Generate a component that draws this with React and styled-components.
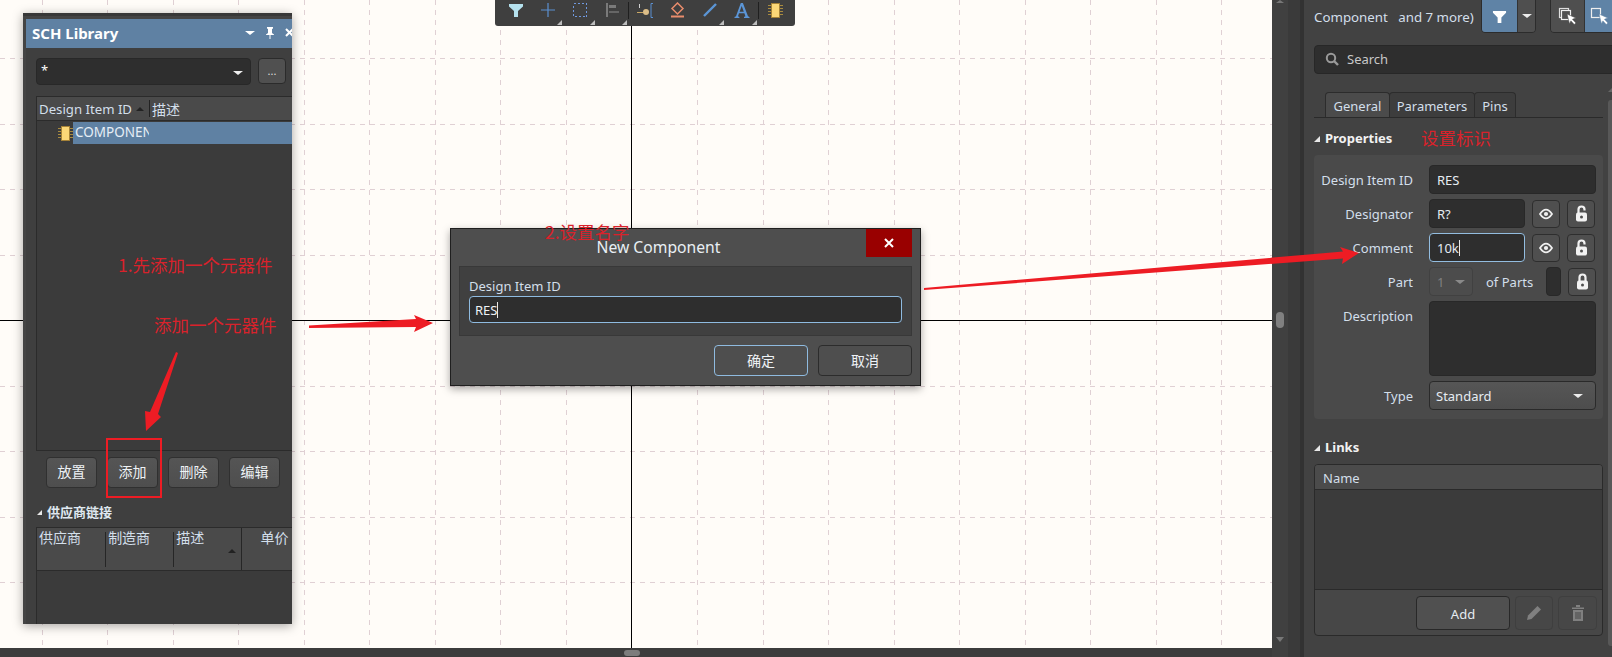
import React from "react";
import styled, { createGlobalStyle } from "styled-components";

const UI = '"Noto Sans","Noto Sans CJK SC",sans-serif';
const CJK = '"Noto Sans CJK SC","Noto Sans",sans-serif';

const Global = createGlobalStyle`
  html, body { margin: 0; padding: 0; background: #fffcf8; overflow: hidden; }
  * { box-sizing: border-box; }
`;

const Page = styled.div`
  position: relative; width: 1612px; height: 657px; display: flex; overflow: hidden;
  font: 13px/18px ${UI}; color: #d3dfea;
`;
const CanvasColumn = styled.div`display: flex; flex-direction: column; width: 1272px;`;
const Canvas = styled.div`position: relative; flex: 1; background: #fffcf8; overflow: hidden;`;
const GridSvg = styled.svg`display: block;`;
const BottomBar = styled.div`
  position: relative; height: 9px; background: #3c3c3c; display: flex; justify-content: center;
`;
const BottomThumb = styled.div`width: 16px; height: 6px; margin: 2px 0 0 -8px; border-radius: 3px; background: #7c7c7c;`;

const Rail = styled.div`position: relative; width: 16px; background: #404040;`;
const RailThumb = styled.div`position: absolute; left: 4px; top: 312px; width: 8px; height: 16px; border-radius: 4px; background: #808080;`;
const RailArrow = styled.div`
  position: absolute; left: 4px; width: 0; height: 0; border-left: 4px solid transparent; border-right: 4px solid transparent;
  ${p => p.$up ? "top: 0; border-bottom: 3px solid #777;" : "top: 637px; border-top: 5px solid #777;"}
`;
const Gutter = styled.div`width: 12px; background: #3a3a3a;`;
const Divider = styled.div`width: 4px; background: #323232;`;

/* Properties */
const Props = styled.div`position: relative; width: 308px; background: #424242; padding-left: 10px; overflow: hidden;`;
const PropHead = styled.div`display: flex; align-items: center; height: 33px; white-space: pre; width: 310px;`;
const HeadText = styled.span`width: 167px; font-size: 13.3px;`;
const HeadGroup = styled.div`
  display: flex; height: 34px; margin-top: -1px; border: 1px solid #2c2c2c; border-radius: 0 0 4px 4px; overflow: hidden;
  margin-right: ${p => p.$mr || 0}px;
`;
const HeadBtn = styled.div`
  width: ${p => p.$w}px; display: flex; align-items: center; justify-content: center;
  background: ${p => p.$active ? "#5f83a6" : "#4f4f4f"};
  & + & { border-left: 1px solid #333; }
`;
const SearchBox = styled.div`
  display: flex; align-items: center; height: 29px; width: 310px; margin-top: 12px; padding: 0 0 2px 10px; gap: 8px;
  background: #2e2e2e; border: 1px solid #272727; border-radius: 4px; color: #c8c8c8;
`;
const Tabs = styled.div`
  display: flex; margin-top: 18px; height: 26px; width: 289px; padding-left: 11px; border-bottom: 1px solid #2a2a2a;
`;
const Tab = styled.div`
  width: ${p => p.$w}px; height: 25px; display: flex; align-items: center; justify-content: center; padding-top: 2px;
  background: ${p => p.$active ? "#4b4b4b" : "#3d3d3d"}; border: 1px solid #2c2c2c; border-bottom: 0; border-radius: 4px 4px 0 0;
  margin-right: -1px;
`;
const Section = styled.div`
  display: flex; align-items: center; gap: 5px; height: 20px; margin-top: ${p => p.$mt}px; padding-bottom: 2px; font-weight: 700; color: #f2f2f2;
`;
const Caret = styled.span`
  width: 0; height: 0; border-bottom: 6px solid #e8e8e8; border-left: 6px solid transparent; margin-top: 2px;
`;
const PropBlock = styled.div`
  width: 289px; margin-top: 6px; padding: 10px 7px 9px 0; background: #4a4a4a; border-radius: 4px;
  display: flex; flex-direction: column; gap: 5px;
`;
const PropRow = styled.div`
  display: grid; grid-template-columns: 99px 1fr; column-gap: 16px; min-height: ${p => p.$h || 29}px;
  align-items: ${p => p.$top ? "start" : "center"};
`;
const PropLabel = styled.div`text-align: right; padding-top: ${p => p.$pt || 0}px;`;
const Controls = styled.div`display: flex; align-items: center; gap: 7px;`;
const Field = styled.div`
  flex: ${p => p.$w ? `0 0 ${p.$w}px` : 1}; height: ${p => p.$h || 29}px; display: flex; align-items: center; padding-left: 7px;
  background: #2e2e2e; border: 1px solid ${p => p.$focus ? "#93bde0" : "#282828"}; border-radius: 4px; color: #e6ecf2;
`;
const Caretline = styled.span`display: inline-block; width: 1px; height: 16px; background: #e8e8e8; margin-left: 0;`;
const IconBtn = styled.div`
  flex: 0 0 ${p => p.$w || 28}px; height: ${p => p.$h || 28}px; display: flex; align-items: center; justify-content: center;
  background: #4f4f4f; border: 1px solid #2e2e2e; border-radius: 4px;
  ${p => p.$off && "background: #474747; border-color: #3f3f3f;"}
`;
const PartSelect = styled.div`
  flex: 0 0 44px; height: 29px; display: flex; align-items: center; justify-content: space-between; padding: 0 7px 0 7px;
  background: #4c4c4c; border: 1px solid #414141; border-radius: 4px; color: #808080;
`;
const OfParts = styled.span`flex: 0 0 60px; margin-left: 6px; white-space: nowrap;`;
const TinyField = styled.div`flex: 0 0 15px; height: 29px; background: #2e2e2e; border: 1px solid #282828; border-radius: 4px; margin-left: -7px;`;
const SelectBox = styled.div`
  flex: 1; height: 29px; display: flex; align-items: center; justify-content: space-between; padding: 0 12px 0 6px;
  background: linear-gradient(#565656, #4d4d4d); border: 1px solid #2a2a2a; border-radius: 4px; color: #e6ecf2;
`;
const DownTri = styled.span`
  width: 0; height: 0; border-left: ${p => p.$s || 5}px solid transparent; border-right: ${p => p.$s || 5}px solid transparent;
  border-top: ${p => (p.$s || 5) - 1}px solid ${p => p.$c || "#ececec"};
`;
const LinksTable = styled.div`
  width: 289px; margin-top: 6px; height: 172px; display: flex; flex-direction: column;
  background: #474747; border: 1px solid #2a2a2a; border-radius: 4px; overflow: hidden;
`;
const LinksHead = styled.div`height: 25px; display: flex; align-items: center; padding: 2px 0 0 8px; background: #4b4b4b; border-bottom: 1px solid #2a2a2a;`;
const LinksBody = styled.div`height: 100px; background: #3b3b3b; border-bottom: 1px solid #2a2a2a;`;
const LinksFoot = styled.div`flex: 1; display: flex; align-items: center; justify-content: flex-end; gap: 5px; padding-right: 5px;`;
const AddBtn = styled.div`
  width: 94px; height: 34px; display: flex; align-items: center; justify-content: center; padding-top: 2px;
  background: #505050; border: 1px solid #282828; border-radius: 4px; color: #e6ecf2;
`;
const PanelScroll = styled.div`position: absolute; right: 0; top: 100px; width: 4px; height: 546px; background: #585858; border-radius: 3px 0 0 3px;`;
const PanelScrollUp = styled.div`
  position: absolute; right: 0; top: 88px; width: 0; height: 0; border-left: 4px solid transparent; border-bottom: 4px solid #666;
`;

/* Library panel */
const LibPanel = styled.div`
  position: absolute; left: 23px; top: 13px; width: 269px; height: 611px; padding-left: 3px; display: flex; flex-direction: column;
  background: #444; border-top: 3px solid #383838; box-shadow: 0 2px 10px rgba(0,0,0,.35); overflow: hidden;
`;
const LibBody = styled.div`flex: 1; display: flex; flex-direction: column; margin-top: 3px; background: #3f3f3f; min-height: 0;`;
const LibTitle = styled.div`
  height: 29px; flex: none; display: flex; align-items: center; padding: 0 0 2px 6px; background: #5f81a3;
  color: #fff; font-size: 15px; font-weight: 700;
`;
const LibTitleText = styled.span`flex: 1;`;
const TitleTools = styled.div`display: flex; align-items: center; gap: 10px; margin-right: -2px;`;
const FilterRow = styled.div`display: flex; gap: 7px; margin: 10px 0 0 10px;`;
const FilterInput = styled.div`
  width: 215px; height: 27px; display: flex; justify-content: space-between; align-items: flex-start; padding: 2px 7px 0 4px;
  background: #2e2e2e; border: 1px solid #282828; border-radius: 4px; color: #fff;
`;
const FilterTri = styled(DownTri)`margin-top: 10px;`;
const MoreBtn = styled.div`
  width: 28px; height: 26px; display: flex; align-items: center; justify-content: center;
  background: #505050; border: 1px solid #2b2b2b; border-radius: 4px; color: #ddd; font-size: 11px;
`;
const ListTable = styled.div`
  margin: 11px 0 0 10px; height: 355px; flex: none; background: #3b3b3b; border: 1px solid #2b2b2b; border-right: 0;
`;
const ListHead = styled.div`
  height: 24px; display: flex; align-items: center; background: #4a4a4a; border-bottom: 1px solid #2b2b2b; padding-left: 2px; font-size: 13.2px;
`;
const ListCol = styled.div`
  width: ${p => p.$w}px; height: 100%; display: flex; align-items: center; justify-content: space-between; padding-right: 5px; white-space: nowrap; font-family: ${p => p.$cjk ? CJK : UI};
  ${p => p.$cjk && "font-size: 14px; padding-left: 2px; border-left: 1px solid #222; height: 17px;"}
`;
const UpTri = styled.span`
  width: 0; height: 0; border-left: 4px solid transparent; border-right: 4px solid transparent; border-bottom: 4px solid #222;
`;
const ListRow = styled.div`height: 22px; margin-top: 1px; display: flex; align-items: center; padding-left: 20px;`;
const ChipCell = styled.div`width: 16px; display: flex; justify-content: center;`;
const RowName = styled.div`
  flex: 1; height: 22px; background: #5f81a3; padding-left: 2px; color: #e6eef6; line-height: 20px; font-size: 13.5px;
`;
const RowClip = styled.div`width: 74px; overflow: hidden; white-space: nowrap;`;
const ActionRow = styled.div`display: flex; gap: 10px; margin: 6px 0 0 20px;`;
const ActionBtn = styled.div`
  width: 51px; height: 31px; display: flex; align-items: center; justify-content: center; padding-bottom: 3px;
  background: linear-gradient(#555, #4e4e4e); border: 1px solid #303030; border-radius: 4px; color: #eef2f6; font: 14px/18px ${CJK};
`;
const SupplierTitle = styled.div`
  display: flex; align-items: center; gap: 5px; height: 20px; margin: 15px 0 0 11px; padding-bottom: 2px; font: 700 13px/18px ${CJK}; color: #dfe8f0;
`;
const SmallCaret = styled.span`
  width: 0; height: 0; border-bottom: 5px solid #e8e8e8; border-left: 5px solid transparent;
`;
const SupplierTable = styled.div`
  flex: 1; margin: 4px 0 0 10px; background: #3b3b3b; border: 1px solid #2b2b2b; border-right: 0; border-bottom: 0;
`;
const SupplierHead = styled.div`
  height: 43px; display: flex; background: #4a4a4a; border-bottom: 1px solid #2b2b2b; font: 14px/18px ${CJK};
`;
const SupplierCol = styled.div`
  position: relative; width: ${p => p.$w}px; padding: 0 0 0 ${p => p.$pl || 2}px; white-space: nowrap;
  &::after { content: ""; display: ${p => p.$last ? "none" : "block"}; position: absolute; right: 0; top: ${p => p.$tall ? 0 : 4}px; bottom: ${p => p.$tall ? 0 : 3}px; width: 1px; background: #262626; }
`;
const SortMark = styled.span`position: absolute; right: 6px; top: 21px; border-left: 4px solid transparent; border-right: 4px solid transparent; border-bottom: 4px solid #222;`;

/* Toolbar */
const Toolbar = styled.div`
  position: absolute; left: 495px; top: 0; width: 300px; height: 26px; display: flex; padding: 0 0 0 4px;
  background: #3f3f3f; border-radius: 0 0 3px 3px;
`;
const ToolCell = styled.div`
  position: relative; width: 32.2px; height: 26px; padding: 0 0 6px 1px; display: flex; align-items: center; justify-content: center;
  ${p => p.$more && `&::after { content: ""; position: absolute; right: 1px; bottom: 1px; border-bottom: 5px solid #bdbdbd; border-left: 5px solid transparent; }`}
`;
const ToolSep = styled.div`width: 1px; height: 17px; margin-top: 2px; background: #1f1f1f;`;

/* Dialog */
const Dialog = styled.div`
  position: absolute; left: 450px; top: 228px; width: 471px; height: 158px; display: flex; flex-direction: column;
  background: #4e4e4e; border: 1px solid #1f1f1f; box-shadow: 0 3px 8px rgba(0,0,0,.35);
`;
const DialogHead = styled.div`display: flex; height: 37px; padding-right: 8px; flex: none;`;
const DialogTitle = styled.div`flex: 1; text-align: center; font-size: 15.7px; line-height: 36px; color: #e8eef4;`;
const CloseBtn = styled.div`width: 46px; height: 28px; display: flex; align-items: center; justify-content: center; background: #990000;`;
const DialogBox = styled.div`
  height: 70px; margin: 0 8px; padding: 10px 9px; background: #404040; border: 1px solid #383838;
`;
const DialogLabel = styled.div`height: 19px; line-height: 18px;`;
const DialogInput = styled.div`
  height: 27px; display: flex; align-items: center; padding-left: 5px;
  background: #2e2e2e; border: 1px solid #8fbbe0; border-radius: 4px; color: #eef2f6;
`;
const DialogFoot = styled.div`display: flex; justify-content: flex-end; gap: 10px; margin-top: 9px; padding-right: 8px;`;
const DialogBtn = styled.div`
  width: 94px; height: 31px; display: flex; align-items: center; justify-content: center; padding-bottom: 1px;
  background: #4e4e4e; border: 1px solid ${p => p.$primary ? "#8fbbe0" : "#2c2c2c"}; border-radius: 4px; color: #eef2f6; font: 14px/18px ${CJK};
`;

/* Annotations over the screenshot */
const Note = styled.div`
  position: absolute; left: ${p => p.$x}px; top: ${p => p.$y}px; font: 17.5px/22px ${CJK}; color: #d9222b; white-space: nowrap;
`;
const RedBox = styled.div`position: absolute; left: 106px; top: 438px; width: 56px; height: 60px; border: 2px solid #ed1c24;`;
const ArrowLayer = styled.svg`position: absolute; left: 0; top: 0; pointer-events: none;`;

const GXS = Array.from({ length: 19 }, (_, i) => 41.5 + i * 65.55);
const GYS = Array.from({ length: 9 }, (_, i) => 58 + i * 65.55);

const Funnel = ({ c = "#fff", s = 16 }) => (
  <svg width={s} height={s} viewBox="0 0 16 16"><path d="M1 2h14v2l-5 5v6H6V9L1 4z" fill={c} /></svg>
);
const Chip = () => (
  <svg width="15" height="15" viewBox="0 0 15 15">
    <path d="M0 2.500h15M0 5.500h15M0 8.500h15M0 11.500h15" stroke="#a98b3f" strokeWidth="1" />
    <rect x="3.500" y=".5" width="8" height="14" fill="#fbd777" stroke="#a58238" />
  </svg>
);
const Eye = () => (
  <svg width="14" height="12" viewBox="0 0 14 12">
    <path d="M1 6c2-3 4-4.300 6-4.300S11 3 13 6c-2 3-4 4.300-6 4.300S3 9 1 6z" fill="none" stroke="#f0f0f0" strokeWidth="1.800" />
    <circle cx="7" cy="6" r="2.100" fill="#f0f0f0" />
  </svg>
);
const Lock = ({ open }) => (
  <svg width="13" height="17" viewBox="0 0 13 17">
    <path d={open ? "M3.500 8V4.500a3 3 0 0 1 6 0v1" : "M3.500 8V4.500a3 3 0 0 1 6 0V8"} fill="none" stroke="#f2f2f2" strokeWidth="2.200" />
    <rect x="1" y="7.500" width="11" height="9" rx="2" fill="#f2f2f2" />
    <circle cx="6.500" cy="12" r="1.500" fill="#4f4f4f" />
  </svg>
);
const SelectCursors = ({ single }) => (
  <svg width="20" height="18" viewBox="0 0 20 18">
    {!single && <rect x="1.500" y="1.500" width="9" height="9" fill="none" stroke="#ddd" strokeWidth="1.200" />}
    <rect x={single ? 1.5 : 3.5} y={single ? 1.5 : 3.5} width="9" height="9" fill={single ? "none" : "#4f4f4f"} stroke="#eee" strokeWidth="1.200" />
    <path d="M9 7l9 4-3.500 1.300L18 16l-1.800 1.500-3.300-3.600L11.500 17z" fill="#fff" stroke={single ? "#5f83a6" : "#4f4f4f"} strokeWidth=".6" />
  </svg>
);

const gridLines = (
  <GridSvg width="1272" height="648">
    <g stroke="#e0d0d4" strokeWidth="1" strokeDasharray="5 5" shapeRendering="crispEdges">
      {GXS.map(x => <line key={x} x1={Math.round(x) + .5} x2={Math.round(x) + .5} y1="0" y2="648" />)}
      {GYS.map(y => <line key={y} y1={Math.round(y) + .5} y2={Math.round(y) + .5} x1="0" x2="1272" />)}
    </g>
    <g stroke="#000" strokeWidth="1" shapeRendering="crispEdges">
      <line x1="631.5" x2="631.5" y1="0" y2="648" />
      <line x1="0" x2="1272" y1="320.5" y2="320.5" />
    </g>
  </GridSvg>
);

const tools = [
  { el: <svg width="14" height="13" viewBox="0 0 14 13"><path d="M0 0h14v2.500L9 7v6H5V7L0 2.500z" fill="#b5e1ee" /></svg> },
  { more: 1, el: <svg width="14" height="14" viewBox="0 0 14 14"><path d="M7 0v14M0 7h14" stroke="#5b8fd0" strokeWidth="1.200" /></svg> },
  { more: 1, el: <svg width="14" height="14" viewBox="0 0 14 14"><rect x=".5" y=".5" width="13" height="13" fill="none" stroke="#6f97dc" strokeWidth="1" strokeDasharray="2 2" shapeRendering="crispEdges" /></svg> },
  { more: 1, el: <svg width="13" height="14" viewBox="0 0 13 14"><path d="M1 0v14" stroke="#7a7a7a" strokeWidth="2" /><path d="M3 2h7v3H3z" fill="#7a7a7a" /><path d="M3 8h10v2H3z" fill="#666" /></svg> },
  { sep: 1 },
  { el: <svg width="16" height="15" viewBox="0 0 16 15"><path d="M0 9.500h6" stroke="#c9a765" strokeWidth="1" /><circle cx="9" cy="9" r="3" fill="#dcbd87" /><path d="M16 .5h-2v14h2" fill="none" stroke="#5b8fd0" strokeWidth="1" /><path d="M2.500 1v4" stroke="#cfcfcf" strokeWidth="1" /></svg> },
  { el: <svg width="15" height="16" viewBox="0 0 15 16"><path d="M7.500 1L13 6.500 7.500 12 2 6.500z" fill="none" stroke="#e88c6c" strokeWidth="1.500" /><path d="M1 14.500h13" stroke="#e88c6c" strokeWidth="2" /></svg> },
  { more: 1, el: <svg width="14" height="14" viewBox="0 0 14 14"><path d="M1 13L13 1" stroke="#5b95d6" strokeWidth="2.400" /></svg> },
  { more: 1, el: <svg width="16" height="15" viewBox="0 0 16 15"><path d="M6.800 0h2.100L14 13.200l1.500.8v1h-5.500v-1l1.400-.7-1-3H5l-1 3 1.400.7v1H.5v-1l1.500-.8zM7.700 3L5.600 8.800h4.200z" fill="#5b95d6" /></svg> },
  { sep: 1 },
  { el: <Chip /> },
];

export default function App() {
  return (
    <Page>
      <Global />
      <CanvasColumn>
        <Canvas>{gridLines}</Canvas>
        <BottomBar><BottomThumb /></BottomBar>
      </CanvasColumn>
      <Rail>
        <RailArrow $up />
        <RailThumb />
        <RailArrow />
      </Rail>
      <Gutter />
      <Divider />
      <Props>
        <PropHead>
          <HeadText>Component   and 7 more)</HeadText>
          <HeadGroup $mr={14}>
            <HeadBtn $w={35} $active><Funnel s={15} /></HeadBtn>
            <HeadBtn $w={18}><DownTri $s={5} /></HeadBtn>
          </HeadGroup>
          <HeadGroup>
            <HeadBtn $w={33}><SelectCursors /></HeadBtn>
            <HeadBtn $w={30} $active><SelectCursors single /></HeadBtn>
          </HeadGroup>
        </PropHead>
        <SearchBox>
          <svg width="14" height="14" viewBox="0 0 14 14"><circle cx="6" cy="6" r="4.200" fill="none" stroke="#9a9a9a" strokeWidth="2" /><path d="M9 9l4 4" stroke="#9a9a9a" strokeWidth="2.400" /></svg>
          Search
        </SearchBox>
        <Tabs>
          <Tab $w={65} $active>General</Tab>
          <Tab $w={86}>Parameters</Tab>
          <Tab $w={42}>Pins</Tab>
        </Tabs>
        <Section $mt={11}><Caret />Properties</Section>
        <PropBlock>
          <PropRow>
            <PropLabel>Design Item ID</PropLabel>
            <Controls><Field>RES</Field></Controls>
          </PropRow>
          <PropRow>
            <PropLabel>Designator</PropLabel>
            <Controls><Field $w={96}>R?</Field><IconBtn><Eye /></IconBtn><IconBtn><Lock open /></IconBtn></Controls>
          </PropRow>
          <PropRow>
            <PropLabel>Comment</PropLabel>
            <Controls><Field $w={96} $focus>10k<Caretline /></Field><IconBtn><Eye /></IconBtn><IconBtn><Lock open /></IconBtn></Controls>
          </PropRow>
          <PropRow>
            <PropLabel>Part</PropLabel>
            <Controls>
              <PartSelect>1<DownTri $c="#8a8a8a" /></PartSelect>
              <OfParts>of Parts</OfParts>
              <TinyField />
              <IconBtn><Lock /></IconBtn>
            </Controls>
          </PropRow>
          <PropRow $h={75} $top>
            <PropLabel $pt={6}>Description</PropLabel>
            <Controls><Field $h={75} /></Controls>
          </PropRow>
          <PropRow>
            <PropLabel>Type</PropLabel>
            <Controls><SelectBox>Standard<DownTri /></SelectBox></Controls>
          </PropRow>
        </PropBlock>
        <Section $mt={19}><Caret />Links</Section>
        <LinksTable>
          <LinksHead>Name</LinksHead>
          <LinksBody />
          <LinksFoot>
            <AddBtn>Add</AddBtn>
            <IconBtn $off $w={38} $h={34}>
              <svg width="15" height="15" viewBox="0 0 15 15"><path d="M0 15l1-4.500L10.500 1 14 4.500 4.500 14z" fill="#808080" /></svg>
            </IconBtn>
            <IconBtn $off $w={39} $h={34}>
              <svg width="12" height="16" viewBox="0 0 12 16"><path d="M0 2.500h12v1.500H0zM4 0h4v2H4zM1 5h10v11H1z" fill="#808080" /><path d="M4 7v7M6 7v7M8 7v7" stroke="#474747" strokeWidth="1" /></svg>
            </IconBtn>
          </LinksFoot>
        </LinksTable>
        <PanelScrollUp />
        <PanelScroll />
      </Props>

      <Toolbar>
        {tools.map((t, i) => t.sep ? <ToolSep key={i} /> : <ToolCell key={i} $more={t.more}>{t.el}</ToolCell>)}
      </Toolbar>

      <LibPanel>
        <LibBody>
          <LibTitle>
            <LibTitleText>SCH Library</LibTitleText>
            <TitleTools>
              <DownTri $s={5} $c="#fff" />
              <svg width="10" height="12" viewBox="0 0 10 12"><path d="M2 0h6v1.500L7 2v4l2 1.500V8H5.500v4h-1V8H1v-.5L3 6V2L2 1.500z" fill="#fff" /></svg>
              <svg width="9" height="9" viewBox="0 0 9 9"><path d="M1 1l7 7M8 1L1 8" stroke="#fff" strokeWidth="2" /></svg>
            </TitleTools>
          </LibTitle>
          <FilterRow>
            <FilterInput>*<FilterTri $s={5} $c="#eee" /></FilterInput>
            <MoreBtn>...</MoreBtn>
          </FilterRow>
          <ListTable>
            <ListHead>
              <ListCol $w={110}>Design Item ID<UpTri /></ListCol>
              <ListCol $cjk $w={60}>描述</ListCol>
            </ListHead>
            <ListRow>
              <ChipCell><Chip /></ChipCell>
              <RowName><RowClip>COMPONENT</RowClip></RowName>
            </ListRow>
          </ListTable>
          <ActionRow>
            <ActionBtn>放置</ActionBtn>
            <ActionBtn>添加</ActionBtn>
            <ActionBtn>删除</ActionBtn>
            <ActionBtn>编辑</ActionBtn>
          </ActionRow>
          <SupplierTitle><SmallCaret />供应商链接</SupplierTitle>
          <SupplierTable>
            <SupplierHead>
              <SupplierCol $w={70}>供应商</SupplierCol>
              <SupplierCol $w={69}>制造商</SupplierCol>
              <SupplierCol $w={69} $tall>描述<SortMark /></SupplierCol>
              <SupplierCol $w={50} $pl={18} $last>单价</SupplierCol>
            </SupplierHead>
          </SupplierTable>
        </LibBody>
      </LibPanel>

      <Dialog>
        <DialogHead>
          <DialogTitle>New Component</DialogTitle>
          <CloseBtn>
            <svg width="10" height="10" viewBox="0 0 10 10"><path d="M1 1l8 8M9 1L1 9" stroke="#fff" strokeWidth="2" /></svg>
          </CloseBtn>
        </DialogHead>
        <DialogBox>
          <DialogLabel>Design Item ID</DialogLabel>
          <DialogInput>RES<Caretline /></DialogInput>
        </DialogBox>
        <DialogFoot>
          <DialogBtn $primary>确定</DialogBtn>
          <DialogBtn>取消</DialogBtn>
        </DialogFoot>
      </Dialog>

      <Note $x={118} $y={254}>1.先添加一个元器件</Note>
      <Note $x={154} $y={314}>添加一个元器件</Note>
      <Note $x={545} $y={221}>2.设置名字</Note>
      <Note $x={1421} $y={127}>设置标识</Note>
      <RedBox />
      <ArrowLayer width="1612" height="657">
        <g fill="#ed1c24">
          <polygon points="309,325.500 416,319 414,315 433,323 414,332 416,327 309,328" />
          <polygon points="176,352 178,353 158,414 161,417 146,431 145,411 150,412" />
          <polygon points="924,288 1343,251.500 1340,247 1359,253 1342,264 1343,258.500 924,290" />
        </g>
      </ArrowLayer>
    </Page>
  );
}
